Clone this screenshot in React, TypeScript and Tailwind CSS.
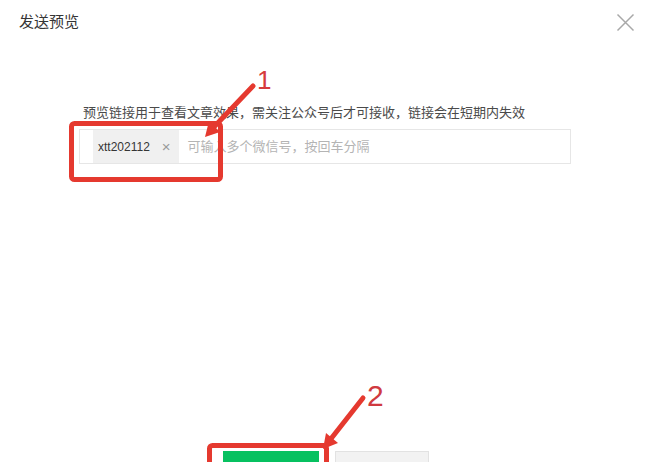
import React from 'react';

const font = { fontFamily: '"Liberation Sans", "Noto Sans CJK SC", sans-serif' };

const Annotations: React.FC = () => (
  <svg className="pointer-events-none absolute inset-0" width="650" height="462" viewBox="0 0 650 462">
    {/* box 1 */}
    <rect x="71.5" y="123.5" width="149" height="56" rx="3" fill="none" stroke="#e5392f" strokeWidth="5" />
    <line x1="253" y1="86" x2="213" y2="128" stroke="#e5392f" strokeWidth="5" strokeLinecap="round" />
    <polygon points="205,137 220,132 209,121" fill="#e5392f" />
    <text x="257" y="89" fontSize="26" fill="#d63a3c" style={font}>1</text>

    {/* box 2 */}
    <rect x="209.5" y="445.5" width="117" height="40" rx="3" fill="none" stroke="#e5392f" strokeWidth="5" />
    <line x1="363" y1="398" x2="330" y2="440" stroke="#e5392f" strokeWidth="5" strokeLinecap="round" />
    <polygon points="323,449 338,443 326,433" fill="#e5392f" />
    <text x="367" y="406" fontSize="30" fill="#d03a40" style={font}>2</text>
  </svg>
);

const App: React.FC = () => {
  return (
    <div className="relative w-[650px] h-[462px] overflow-hidden bg-white flex flex-col" style={font}>
      {/* Header */}
      <div className="flex justify-between pl-[19px] pr-[15px] pt-[13px]">
        <h2 className="text-[15px] leading-[18px] text-[#353535]">发送预览</h2>
        <svg width="19" height="19" viewBox="0 0 19 19">
          <path d="M1.5 1.5 L17.5 17.5 M17.5 1.5 L1.5 17.5" stroke="#a8a8a8" strokeWidth="1.5" fill="none" />
        </svg>
      </div>

      {/* Body */}
      <div className="pl-[83px] mt-[71px]">
        <p className="text-[13px] leading-[20px] text-[#4a4a4a]">
          预览链接用于查看文章效果，需关注公众号后才可接收，链接会在短期内失效
        </p>
      </div>
      <div className="ml-[79px] mt-[6px] w-[492px] h-[45px] border border-[#e6e6e6] flex items-center pl-[13px]">
        <div className="h-[33px] bg-[#f0f0f0] flex items-center pl-[5px] pr-[8px] gap-[12px]">
          <span className="text-[12px] text-[#353535]">xtt202112</span>
          <span className="text-[15px] text-[#9a9a9a] leading-none">×</span>
        </div>
        <span className="ml-[9px] text-[13px] text-[#b4b4b4]">可输入多个微信号，按回车分隔</span>
      </div>

      {/* Footer buttons (labels fall below the visible area) */}
      <div className="mt-[287px] flex justify-center gap-4 pl-[2px]">
        <div className="w-[96px] h-9 bg-[#07c160]" />
        <div className="w-[94px] h-9 bg-[#f2f2f2] border border-[#e2e2e2]" />
      </div>

      <Annotations />
    </div>
  );
};

export default App;
